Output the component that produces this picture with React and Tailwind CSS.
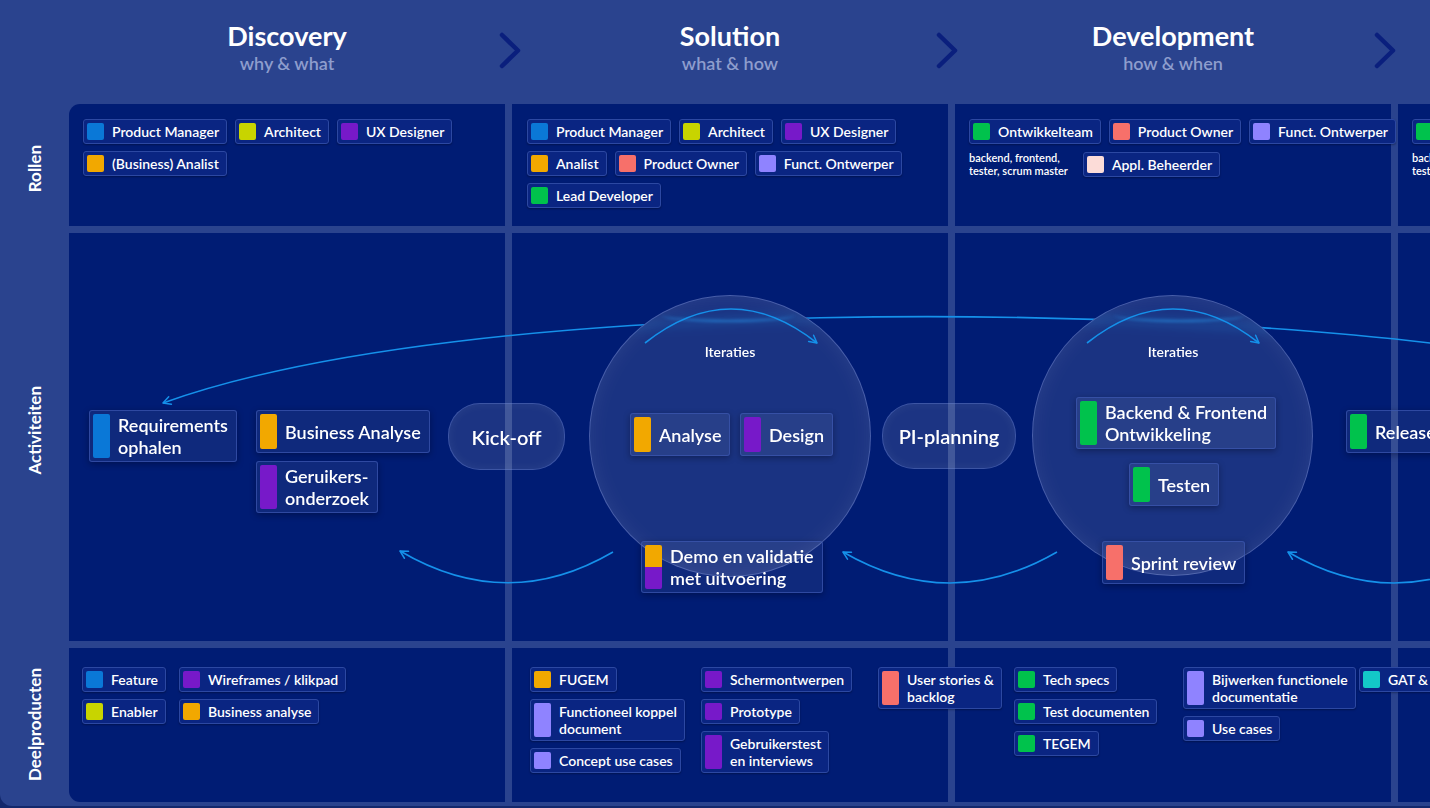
import React from 'react';

const SW = {
  blue: 'bg-[#0a78d7]',
  lime: 'bg-[#c8d400]',
  purple: 'bg-[#7719c9]',
  orange: 'bg-[#f2a800]',
  salmon: 'bg-[#f7706a]',
  lav: 'bg-[#8f83ff]',
  green: 'bg-[#00c24c]',
  pink: 'bg-[#fcdcd8]',
  teal: 'bg-[#13c9c8]',
};

function Chip({ color, children }) {
  return (
    <div className="flex items-stretch gap-2 rounded-[3px] border border-[#2c48a2] bg-[#0a2582] p-[3px] pr-[7px] shadow-[0_1px_2px_rgba(0,0,0,0.3)]">
      <span className={`w-[17px] min-h-[17px] shrink-0 rounded-[2px] ${SW[color]}`} />
      <span className="self-center whitespace-nowrap text-[14px] font-semibold leading-[17px] text-white">{children}</span>
    </div>
  );
}

function BigChip({ color, split, className, children }) {
  return (
    <div className={`absolute flex items-stretch gap-2 rounded-[3px] border border-[#3d58b0]/70 bg-white/[0.06] p-[3px] pr-[8px] shadow-[0_2px_6px_rgba(0,0,20,0.35)] ${className}`}>
      {split ? (
        <span className="flex w-[17px] min-h-[35px] shrink-0 flex-col overflow-hidden rounded-[2px]">
          <span className="flex-1 bg-[#f2a800]" />
          <span className="flex-1 bg-[#7719c9]" />
        </span>
      ) : (
        <span className={`w-[17px] min-h-[35px] shrink-0 rounded-[2px] ${SW[color]}`} />
      )}
      <span className="self-center whitespace-nowrap text-[18px] font-semibold leading-[22px] text-white">{children}</span>
    </div>
  );
}

function Pill({ className, children }) {
  return (
    <div className={`absolute flex items-center justify-center rounded-[32px] border border-[#6f86d6]/40 bg-white/[0.11] text-[20px] font-semibold text-white shadow-[inset_0_0_12px_rgba(255,255,255,0.06)] ${className}`}>
      {children}
    </div>
  );
}

function Note({ children }) {
  return <div className="text-[11px] font-semibold leading-[13px] text-white">{children}</div>;
}

function RowLabel({ children }) {
  return (
    <span className="rotate-180 text-[17px] font-bold text-white [writing-mode:vertical-rl]">{children}</span>
  );
}

function Chevron({ className }) {
  return (
    <svg className={`absolute top-[32px] ${className}`} width="22" height="37" viewBox="0 0 22 37" fill="none">
      <path d="M3 3 L19 18.5 L3 34" stroke="#0a1f7d" strokeWidth="4.5" strokeLinecap="round" strokeLinejoin="round" />
    </svg>
  );
}

const phases = [
  { title: 'Discovery', sub: 'why & what', chev: 'left-[430px]' },
  { title: 'Solution', sub: 'what & how', chev: 'left-[424px]' },
  { title: 'Development', sub: 'how & when', chev: 'left-[419px]' },
];

const cell = 'bg-[#001c74]';

export default function App() {
  return (
    <div className="h-[808px] w-[1430px] overflow-hidden bg-[#13286c] [font-family:Lato,'Noto_Sans',sans-serif]">
      <div className="flex h-[806px] rounded-bl-[12px] bg-[#2a438e]">
        {/* row labels */}
        <div className="flex w-[69px] shrink-0 flex-col gap-[7px] pt-[104px]">
          <div className="flex h-[122px] items-center justify-center pt-[8px]"><RowLabel>Rollen</RowLabel></div>
          <div className="flex h-[408px] items-center justify-center pb-[14px]"><RowLabel>Activiteiten</RowLabel></div>
          <div className="flex h-[154px] items-center justify-center"><RowLabel>Deelproducten</RowLabel></div>
        </div>

        <div className="flex w-[1765px] shrink-0 flex-col">
          {/* phase headers */}
          <div className="grid h-[104px] grid-cols-[repeat(4,436px)] gap-x-[7px]">
            {phases.map((p) => (
              <div key={p.title} className="relative flex flex-col items-center pt-[20px]">
                <div className="text-[27px] font-bold leading-[32px] text-white">{p.title}</div>
                <div className="mt-[1px] text-[18px] font-semibold leading-[20px] text-[#8e9dcd]">{p.sub}</div>
                <Chevron className={p.chev} />
              </div>
            ))}
            <div />
          </div>

          <div className="flex flex-col gap-[7px] overflow-hidden rounded-l-[11px]">
            {/* Rollen */}
            <div className="grid h-[122px] grid-cols-[repeat(4,436px)] gap-x-[7px]">
              <div className={`${cell} flex flex-col gap-[7px] pl-[14px] pt-[15px]`}>
                <div className="flex gap-[8px]">
                  <Chip color="blue">Product Manager</Chip>
                  <Chip color="lime">Architect</Chip>
                  <Chip color="purple">UX Designer</Chip>
                </div>
                <div className="flex gap-[8px]">
                  <Chip color="orange">(Business) Analist</Chip>
                </div>
              </div>
              <div className={`${cell} flex flex-col gap-[7px] pl-[15px] pt-[15px]`}>
                <div className="flex gap-[8px]">
                  <Chip color="blue">Product Manager</Chip>
                  <Chip color="lime">Architect</Chip>
                  <Chip color="purple">UX Designer</Chip>
                </div>
                <div className="flex gap-[8px]">
                  <Chip color="orange">Analist</Chip>
                  <Chip color="salmon">Product Owner</Chip>
                  <Chip color="lav">Funct. Ontwerper</Chip>
                </div>
                <div className="flex gap-[8px]">
                  <Chip color="green">Lead Developer</Chip>
                </div>
              </div>
              <div className={`${cell} flex flex-col gap-[7px] pl-[14px] pt-[15px]`}>
                <div className="flex gap-[8px]">
                  <Chip color="green">Ontwikkelteam</Chip>
                  <Chip color="salmon">Product Owner</Chip>
                  <Chip color="lav">Funct. Ontwerper</Chip>
                </div>
                <div className="flex items-center gap-[15px]">
                  <Note>backend, frontend,<br />tester, scrum master</Note>
                  <Chip color="pink">Appl. Beheerder</Chip>
                </div>
              </div>
              <div className={`${cell} flex flex-col gap-[7px] pl-[14px] pt-[15px]`}>
                <div className="flex gap-[8px]">
                  <Chip color="green">Ontwikkelteam</Chip>
                  <Chip color="salmon">Product Owner</Chip>
                </div>
                <div className="flex items-center gap-[15px]">
                  <Note>backend, frontend,<br />tester, scrum master</Note>
                </div>
              </div>
            </div>

            {/* Activiteiten */}
            <div className="relative h-[408px]">
              <div className="grid h-full grid-cols-[repeat(4,436px)] gap-x-[7px]">
                <div className={cell} />
                <div className={cell} />
                <div className={cell} />
                <div className={cell} />
              </div>
              <div className="absolute inset-0">
                <svg className="absolute left-0 top-0" width="1500" height="408" fill="none">
                  <defs>
                    <marker id="ah" viewBox="0 0 10 10" refX="9" refY="5" markerWidth="10" markerHeight="10" markerUnits="userSpaceOnUse" orient="auto">
                      <path d="M1.5 1 L9 5 L1.5 9" fill="none" stroke="#1591ea" strokeWidth="1.5" strokeLinecap="round" strokeLinejoin="round" />
                    </marker>
                  </defs>
                  <path d="M1420 118 C1100 70 400 60 94 170" stroke="#1591ea" strokeWidth="1.6" markerEnd="url(#ah)" />
                  <path d="M544 319 Q438 381 331 318" stroke="#1591ea" strokeWidth="1.6" markerEnd="url(#ah)" />
                  <path d="M988 319 Q881 381 774 319" stroke="#1591ea" strokeWidth="1.6" markerEnd="url(#ah)" />
                  <path d="M1431 319 Q1325 381 1219 319" stroke="#1591ea" strokeWidth="1.6" markerEnd="url(#ah)" />
                </svg>

                {/* iteration circles */}
                <div className="absolute left-[520px] top-[62px] h-[282px] w-[282px] rounded-full border border-[#8ea2e6]/40 bg-white/10 shadow-[inset_0_0_24px_rgba(255,255,255,0.07)] backdrop-blur-[6px]" />
                <div className="absolute left-[963px] top-[62px] h-[281px] w-[281px] rounded-full border border-[#8ea2e6]/40 bg-white/10 shadow-[inset_0_0_24px_rgba(255,255,255,0.07)] backdrop-blur-[6px]" />
                <div className="absolute left-[592px] top-[75px] h-[14px] w-[134px] rounded-[50%] border-b-2 border-[#2a9cf0]/60 blur-[1.5px]" />
                <div className="absolute left-[1045px] top-[75px] h-[14px] w-[132px] rounded-[50%] border-b-2 border-[#2a9cf0]/60 blur-[1.5px]" />

                <svg className="absolute left-0 top-0" width="1500" height="408" fill="none">
                  <defs>
                    <marker id="ah2" viewBox="0 0 10 10" refX="9" refY="5" markerWidth="10" markerHeight="10" markerUnits="userSpaceOnUse" orient="auto">
                      <path d="M1.5 1 L9 5 L1.5 9" fill="none" stroke="#1591ea" strokeWidth="1.5" strokeLinecap="round" strokeLinejoin="round" />
                    </marker>
                  </defs>
                  <path d="M576 110 Q662 42 748 110" stroke="#1591ea" strokeWidth="1.6" markerEnd="url(#ah2)" />
                  <path d="M1018 110 Q1104 42 1190 110" stroke="#1591ea" strokeWidth="1.6" markerEnd="url(#ah2)" />
                </svg>

                <div className="absolute left-[611px] top-[111px] w-[100px] text-center text-[14px] font-semibold leading-[16px] text-white">Iteraties</div>
                <div className="absolute left-[1054px] top-[111px] w-[100px] text-center text-[14px] font-semibold leading-[16px] text-white">Iteraties</div>

                <BigChip color="blue" className="left-[20px] top-[177px]">Requirements<br />ophalen</BigChip>
                <BigChip color="orange" className="left-[187px] top-[177px]">Business Analyse</BigChip>
                <BigChip color="purple" className="left-[187px] top-[228px]">Geruikers-<br />onderzoek</BigChip>
                <Pill className="left-[379px] top-[170px] h-[67px] w-[117px]">Kick-off</Pill>

                <BigChip color="orange" className="left-[561px] top-[180px]">Analyse</BigChip>
                <BigChip color="purple" className="left-[671px] top-[180px]">Design</BigChip>
                <BigChip split className="left-[572px] top-[308px]">Demo en validatie<br />met uitvoering</BigChip>
                <Pill className="left-[813px] top-[170px] h-[66px] w-[134px]">PI-planning</Pill>

                <BigChip color="green" className="left-[1007px] top-[164px]">Backend &amp; Frontend<br />Ontwikkeling</BigChip>
                <BigChip color="green" className="left-[1060px] top-[230px]">Testen</BigChip>
                <BigChip color="salmon" className="left-[1033px] top-[308px]">Sprint review</BigChip>
                <BigChip color="green" className="left-[1277px] top-[177px]">Release</BigChip>
              </div>
            </div>

            {/* Deelproducten */}
            <div className="grid h-[154px] grid-cols-[repeat(4,436px)] gap-x-[7px]">
              <div className={`${cell} flex pl-[13px] pt-[19px]`}>
                <div className="flex w-[97px] shrink-0 flex-col items-start gap-[7px]">
                  <Chip color="blue">Feature</Chip>
                  <Chip color="lime">Enabler</Chip>
                </div>
                <div className="flex flex-col items-start gap-[7px]">
                  <Chip color="purple">Wireframes / klikpad</Chip>
                  <Chip color="orange">Business analyse</Chip>
                </div>
              </div>
              <div className={`${cell} relative z-20 flex pl-[18px] pt-[19px]`}>
                <div className="flex w-[171px] shrink-0 flex-col items-start gap-[7px]">
                  <Chip color="orange">FUGEM</Chip>
                  <Chip color="lav">Functioneel koppel<br />document</Chip>
                  <Chip color="lav">Concept use cases</Chip>
                </div>
                <div className="flex w-[177px] shrink-0 flex-col items-start gap-[7px]">
                  <Chip color="purple">Schermontwerpen</Chip>
                  <Chip color="purple">Prototype</Chip>
                  <Chip color="purple">Gebruikerstest<br />en interviews</Chip>
                </div>
                <div className="flex shrink-0 flex-col items-start gap-[7px]">
                  <Chip color="salmon">User stories &amp;<br />backlog</Chip>
                </div>
              </div>
              <div className={`${cell} relative z-10 flex pl-[59px] pt-[19px]`}>
                <div className="flex w-[169px] shrink-0 flex-col items-start gap-[7px]">
                  <Chip color="green">Tech specs</Chip>
                  <Chip color="green">Test documenten</Chip>
                  <Chip color="green">TEGEM</Chip>
                </div>
                <div className="flex w-[176px] shrink-0 flex-col items-start gap-[7px]">
                  <Chip color="lav">Bijwerken functionele<br />documentatie</Chip>
                  <Chip color="lav">Use cases</Chip>
                </div>
                <div className="flex shrink-0 flex-col items-start gap-[7px]">
                  <Chip color="teal">GAT &amp; PAT</Chip>
                </div>
              </div>
              <div className={cell} />
            </div>
          </div>
        </div>
      </div>
    </div>
  );
}
